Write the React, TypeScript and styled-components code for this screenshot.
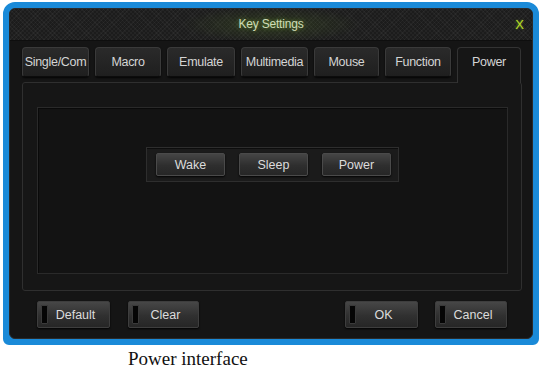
import React from "react";
import styled, { createGlobalStyle } from "styled-components";

const Global = createGlobalStyle`
  html, body { margin: 0; padding: 0; background: #ffffff; }
  body { font-family: "Liberation Sans", Arial, sans-serif; }
`;

const Page = styled.div`
  width: 542px;
  height: 374px;
  display: flex;
  flex-direction: column;
  align-items: flex-start;
`;

const Frame = styled.div`
  margin: 2px 0 0 3px;
  width: 536px;
  height: 343px;
  box-sizing: border-box;
  border: 6px solid #1a8ad8;
  border-radius: 12px 12px 6px 6px;
  background: #1a8ad8;
  display: flex;
`;

const Window = styled.div`
  flex: 1;
  background: #151515;
  border: 1px solid #2a2a2a;
  border-radius: 6px;
  display: flex;
  flex-direction: column;
  overflow: hidden;
`;

const TitleBar = styled.div`
  height: 31px;
  flex: none;
  display: flex;
  align-items: center;
  justify-content: center;
  position: relative;
  border-bottom: 1px solid #0e0e0e;
  background:
    radial-gradient(ellipse 90px 18px at 50% 50%, rgba(80, 110, 40, 0.35), rgba(0, 0, 0, 0) 100%),
    repeating-linear-gradient(45deg, rgba(255,255,255,0.035) 0 1px, rgba(0,0,0,0) 1px 3px),
    repeating-linear-gradient(-45deg, rgba(255,255,255,0.035) 0 1px, rgba(0,0,0,0) 1px 3px),
    #1c1c1c;
`;

const Title = styled.span`
  font-size: 12px;
  color: #cfdcb8;
  text-shadow: 0 0 4px rgba(140, 200, 60, 0.6);
  letter-spacing: -0.2px;
  margin-top: -2px;
`;

const Close = styled.span`
  position: absolute;
  right: 8px;
  top: 8px;
  font-size: 13px;
  color: #b4dc28;
  font-family: "Liberation Sans", sans-serif;
  text-shadow: 0 0 2px rgba(180, 220, 40, 0.5);
`;

const TabRow = styled.div`
  height: 36px;
  margin-top: 6px;
  padding-left: 12px;
  display: flex;
  gap: 6px;
  align-items: flex-start;
`;

const Tab = styled.div<{ $active?: boolean; $w: number }>`
  width: ${(p) => p.$w}px;
  height: ${(p) => (p.$active ? 36 : 30)}px;
  box-sizing: border-box;
  display: flex;
  justify-content: center;
  padding-top: 7px;
  font-size: 12.5px;
  color: #d4d4d4;
  letter-spacing: -0.3px;
  white-space: nowrap;
  border: 1px solid ${(p) => (p.$active ? "#333" : "#3a3a3a")};
  border-bottom: ${(p) => (p.$active ? "none" : "1px solid #0c0c0c")};
  border-radius: 4px 4px ${(p) => (p.$active ? "0 0" : "3px 3px")};
  background: ${(p) =>
    p.$active ? "#161616" : "linear-gradient(#2a2a2a, #1f1f1f)"};
  box-shadow: ${(p) => (p.$active ? "none" : "0 1px 2px rgba(0,0,0,0.8)")};
  position: relative;
  z-index: ${(p) => (p.$active ? 1 : 0)};
`;

const Panel = styled.div`
  height: 209px;
  margin: -1px 10px 0 12px;
  box-sizing: border-box;
  border: 1px solid #2f2f2f;
  border-radius: 3px;
  background: #161616;
  padding: 24px 13px 16px 14px;
  display: flex;
`;

const InnerBox = styled.div`
  flex: 1;
  border: 1px solid #2a2a2a;
  background: #131313;
  box-shadow: inset 1px 1px 0 #0a0a0a;
  display: flex;
  justify-content: center;
  align-items: flex-start;
  padding-top: 39px;
`;

const Group = styled.div`
  width: 253px;
  height: 35px;
  box-sizing: border-box;
  border: 1px solid #2e2e2e;
  background: #1b1b1b;
  box-shadow: inset 0 1px 0 #0d0d0d;
  display: flex;
  align-items: flex-start;
  padding: 5px 0 0 9px;
  gap: 14px;
`;

const PowerButton = styled.div`
  width: 69px;
  height: 23px;
  box-sizing: border-box;
  display: flex;
  align-items: center;
  justify-content: center;
  font-size: 12.5px;
  color: #dcdcdc;
  border: 1px solid #4a4a4a;
  border-radius: 2px;
  background: linear-gradient(#454545, #2e2e2e 55%, #262626);
  box-shadow: 0 1px 2px rgba(0, 0, 0, 0.9);
`;

const Footer = styled.div`
  flex: 1;
  display: flex;
  justify-content: space-between;
  align-items: flex-start;
  padding: 10px 25px 0 27px;
`;

const FooterGroup = styled.div<{ $gap: number }>`
  display: flex;
  gap: ${(p) => p.$gap}px;
`;

const FooterButton = styled.div<{ $w: number }>`
  width: ${(p) => p.$w}px;
  height: 27px;
  box-sizing: border-box;
  position: relative;
  display: flex;
  align-items: center;
  justify-content: center;
  padding-left: 4px;
  font-size: 12.5px;
  color: #dcdcdc;
  border: 1px solid #3e3e3e;
  border-radius: 2px;
  background: linear-gradient(#474747, #303030 55%, #262626);
  box-shadow: 0 1px 2px rgba(0, 0, 0, 0.9);

  &::before {
    content: "";
    position: absolute;
    left: 3px;
    top: 3px;
    bottom: 3px;
    width: 5px;
    background: #050505;
    border: 1px solid #3a3a3a;
    border-radius: 1px;
  }
`;

const Caption = styled.div`
  margin: 3px 0 0 128px;
  font-family: "Liberation Serif", "Times New Roman", serif;
  font-size: 19px;
  line-height: 22px;
  color: #111;
`;

const tabs: { label: string; w: number }[] = [
  { label: "Single/Com", w: 67 },
  { label: "Macro", w: 66 },
  { label: "Emulate", w: 68 },
  { label: "Multimedia", w: 67 },
  { label: "Mouse", w: 65 },
  { label: "Function", w: 66 },
  { label: "Power", w: 64 },
];

export default function App() {
  return (
    <Page>
      <Global />
      <Frame>
        <Window>
          <TitleBar>
            <Title>Key Settings</Title>
            <Close>X</Close>
          </TitleBar>
          <TabRow>
            {tabs.map((t) => (
              <Tab key={t.label} $w={t.w} $active={t.label === "Power"}>
                {t.label}
              </Tab>
            ))}
          </TabRow>
          <Panel>
            <InnerBox>
              <Group>
                <PowerButton>Wake</PowerButton>
                <PowerButton>Sleep</PowerButton>
                <PowerButton>Power</PowerButton>
              </Group>
            </InnerBox>
          </Panel>
          <Footer>
            <FooterGroup $gap={18}>
              <FooterButton $w={73}>Default</FooterButton>
              <FooterButton $w={71}>Clear</FooterButton>
            </FooterGroup>
            <FooterGroup $gap={17}>
              <FooterButton $w={73}>OK</FooterButton>
              <FooterButton $w={72}>Cancel</FooterButton>
            </FooterGroup>
          </Footer>
        </Window>
      </Frame>
      <Caption>Power interface</Caption>
    </Page>
  );
}
